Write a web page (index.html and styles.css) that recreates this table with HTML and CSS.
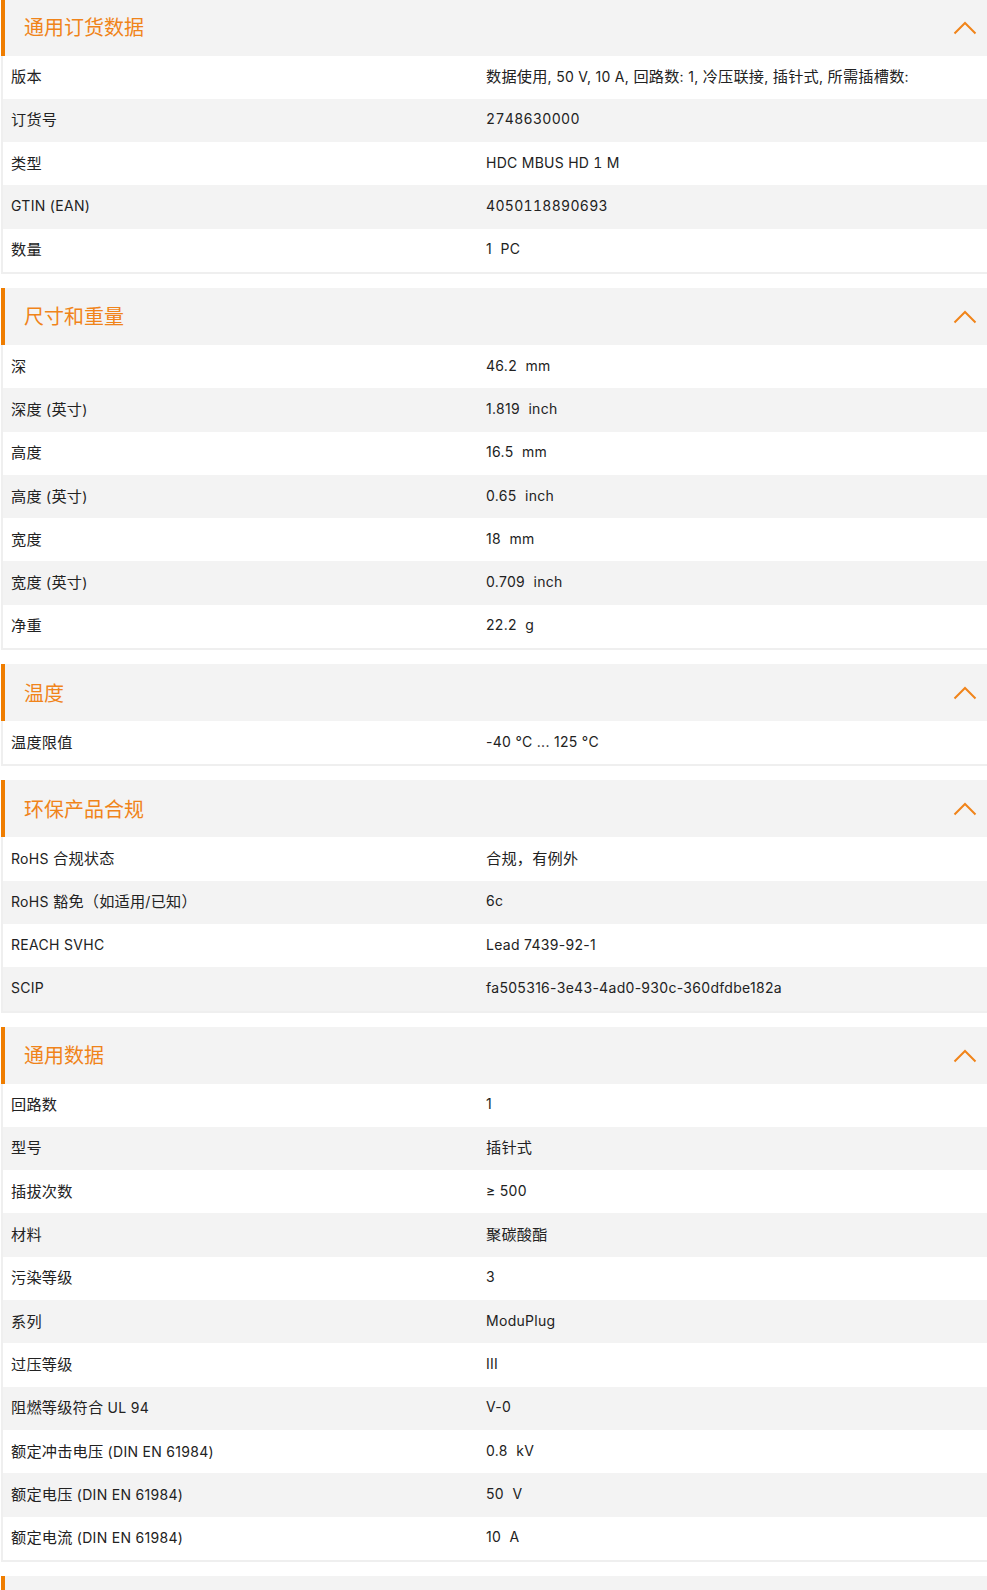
FILE: index.html
```html
<!DOCTYPE html>
<html lang="zh">
<head>
<meta charset="utf-8">
<title>产品数据</title>
<link rel="stylesheet" href="styles.css">
</head>
<body>
<div class="page">

  <section class="sec">
    <div class="sec-head"><h2 class="sec-title">通用订货数据</h2><svg class="chev" viewBox="0 0 24 14" width="24" height="14"><polyline points="1.5,12.5 12,2 22.5,12.5"/></svg></div>
    <div class="tbl">
      <div class="row"><div class="k"><span class="zh">版本</span></div><div class="v"><span class="zh">数据使用</span>, 50 V, 10 A, <span class="zh">回路数</span>: 1, <span class="zh">冷压联接</span>, <span class="zh">插针式</span>, <span class="zh">所需插槽数</span>:</div></div>
      <div class="row"><div class="k"><span class="zh">订货号</span></div><div class="v tnum">2748630000</div></div>
      <div class="row"><div class="k"><span class="zh">类型</span></div><div class="v tnum">HDC MBUS HD 1 M</div></div>
      <div class="row"><div class="k">GTIN (EAN)</div><div class="v tnum">4050118890693</div></div>
      <div class="row"><div class="k"><span class="zh">数量</span></div><div class="v">1&nbsp; PC</div></div>
    </div>
  </section>

  <section class="sec">
    <div class="sec-head"><h2 class="sec-title">尺寸和重量</h2><svg class="chev" viewBox="0 0 24 14" width="24" height="14"><polyline points="1.5,12.5 12,2 22.5,12.5"/></svg></div>
    <div class="tbl">
      <div class="row"><div class="k"><span class="zh">深</span></div><div class="v">46.2&nbsp; mm</div></div>
      <div class="row"><div class="k"><span class="zh">深度</span> (<span class="zh">英寸</span>)</div><div class="v">1.819&nbsp; inch</div></div>
      <div class="row"><div class="k"><span class="zh">高度</span></div><div class="v">16.5&nbsp; mm</div></div>
      <div class="row"><div class="k"><span class="zh">高度</span> (<span class="zh">英寸</span>)</div><div class="v">0.65&nbsp; inch</div></div>
      <div class="row"><div class="k"><span class="zh">宽度</span></div><div class="v">18&nbsp; mm</div></div>
      <div class="row"><div class="k"><span class="zh">宽度</span> (<span class="zh">英寸</span>)</div><div class="v">0.709&nbsp; inch</div></div>
      <div class="row"><div class="k"><span class="zh">净重</span></div><div class="v">22.2&nbsp; g</div></div>
    </div>
  </section>

  <section class="sec">
    <div class="sec-head"><h2 class="sec-title">温度</h2><svg class="chev" viewBox="0 0 24 14" width="24" height="14"><polyline points="1.5,12.5 12,2 22.5,12.5"/></svg></div>
    <div class="tbl">
      <div class="row"><div class="k"><span class="zh">温度限值</span></div><div class="v">-40 °C ... 125 °C</div></div>
    </div>
  </section>

  <section class="sec">
    <div class="sec-head"><h2 class="sec-title">环保产品合规</h2><svg class="chev" viewBox="0 0 24 14" width="24" height="14"><polyline points="1.5,12.5 12,2 22.5,12.5"/></svg></div>
    <div class="tbl">
      <div class="row"><div class="k">RoHS <span class="zh">合规状态</span></div><div class="v"><span class="zh">合规，有例外</span></div></div>
      <div class="row"><div class="k">RoHS <span class="zh">豁免（如适用</span>/<span class="zh">已知）</span></div><div class="v">6c</div></div>
      <div class="row"><div class="k">REACH SVHC</div><div class="v">Lead 7439-92-1</div></div>
      <div class="row"><div class="k">SCIP</div><div class="v">fa505316-3e43-4ad0-930c-360dfdbe182a</div></div>
    </div>
  </section>

  <section class="sec">
    <div class="sec-head"><h2 class="sec-title">通用数据</h2><svg class="chev" viewBox="0 0 24 14" width="24" height="14"><polyline points="1.5,12.5 12,2 22.5,12.5"/></svg></div>
    <div class="tbl">
      <div class="row"><div class="k"><span class="zh">回路数</span></div><div class="v">1</div></div>
      <div class="row"><div class="k"><span class="zh">型号</span></div><div class="v"><span class="zh">插针式</span></div></div>
      <div class="row"><div class="k"><span class="zh">插拔次数</span></div><div class="v">≥ 500</div></div>
      <div class="row"><div class="k"><span class="zh">材料</span></div><div class="v"><span class="zh">聚碳酸酯</span></div></div>
      <div class="row"><div class="k"><span class="zh">污染等级</span></div><div class="v">3</div></div>
      <div class="row"><div class="k"><span class="zh">系列</span></div><div class="v">ModuPlug</div></div>
      <div class="row"><div class="k"><span class="zh">过压等级</span></div><div class="v">III</div></div>
      <div class="row"><div class="k"><span class="zh">阻燃等级符合</span> UL 94</div><div class="v">V-0</div></div>
      <div class="row"><div class="k"><span class="zh">额定冲击电压</span> (DIN EN 61984)</div><div class="v">0.8&nbsp; kV</div></div>
      <div class="row"><div class="k"><span class="zh">额定电压</span> (DIN EN 61984)</div><div class="v">50&nbsp; V</div></div>
      <div class="row"><div class="k"><span class="zh">额定电流</span> (DIN EN 61984)</div><div class="v">10&nbsp; A</div></div>
    </div>
  </section>

  <section class="sec">
    <div class="sec-head sec-head-empty"></div>
  </section>

</div>
</body>
</html>
```

FILE: styles.css
```css
html, body {
  margin: 0;
  padding: 0;
  background: #ffffff;
  overflow: hidden;
}

body {
  font-family: Inter, "Noto Sans CJK SC", sans-serif;
  color: #222222;
}

.page {
  margin-top: -1.5px;
  padding-left: 1px;
  display: flex;
  flex-direction: column;
  gap: 14px;
}

.sec-head {
  height: 57px;
  background: #f3f3f3;
  border-left: 4px solid #ef7d00;
  display: flex;
  align-items: center;
  justify-content: space-between;
  padding: 0 10px 0 19px;
}

.sec-title {
  margin: 0;
  font-family: "Noto Sans CJK SC", sans-serif;
  font-size: 20px;
  font-weight: 400;
  color: #f0841a;
  line-height: 1;
}

.chev {
  display: block;
  margin-top: 1px;
}

.chev polyline {
  fill: none;
  stroke: #f0841a;
  stroke-width: 2;
}

.tbl {
  border-left: 2px solid #efefef;
  border-bottom: 2px solid #efefef;
}

.row {
  height: 43.3px;
  display: grid;
  grid-template-columns: 475px 1fr;
  align-items: center;
  font-size: 14px;
  line-height: 18px;
  letter-spacing: 0.3px;
  background: #ffffff;
}

.row:nth-child(even) {
  background: #f3f3f3;
}

.k, .v {
  padding-left: 8px;
  padding-bottom: 2px;
  white-space: nowrap;
}

.tnum {
  font-variant-numeric: tabular-nums;
}

.zh {
  font-family: "Noto Sans CJK SC", sans-serif;
  font-size: 15.2px;
  letter-spacing: 0.2px;
  line-height: 18px;
}
```
